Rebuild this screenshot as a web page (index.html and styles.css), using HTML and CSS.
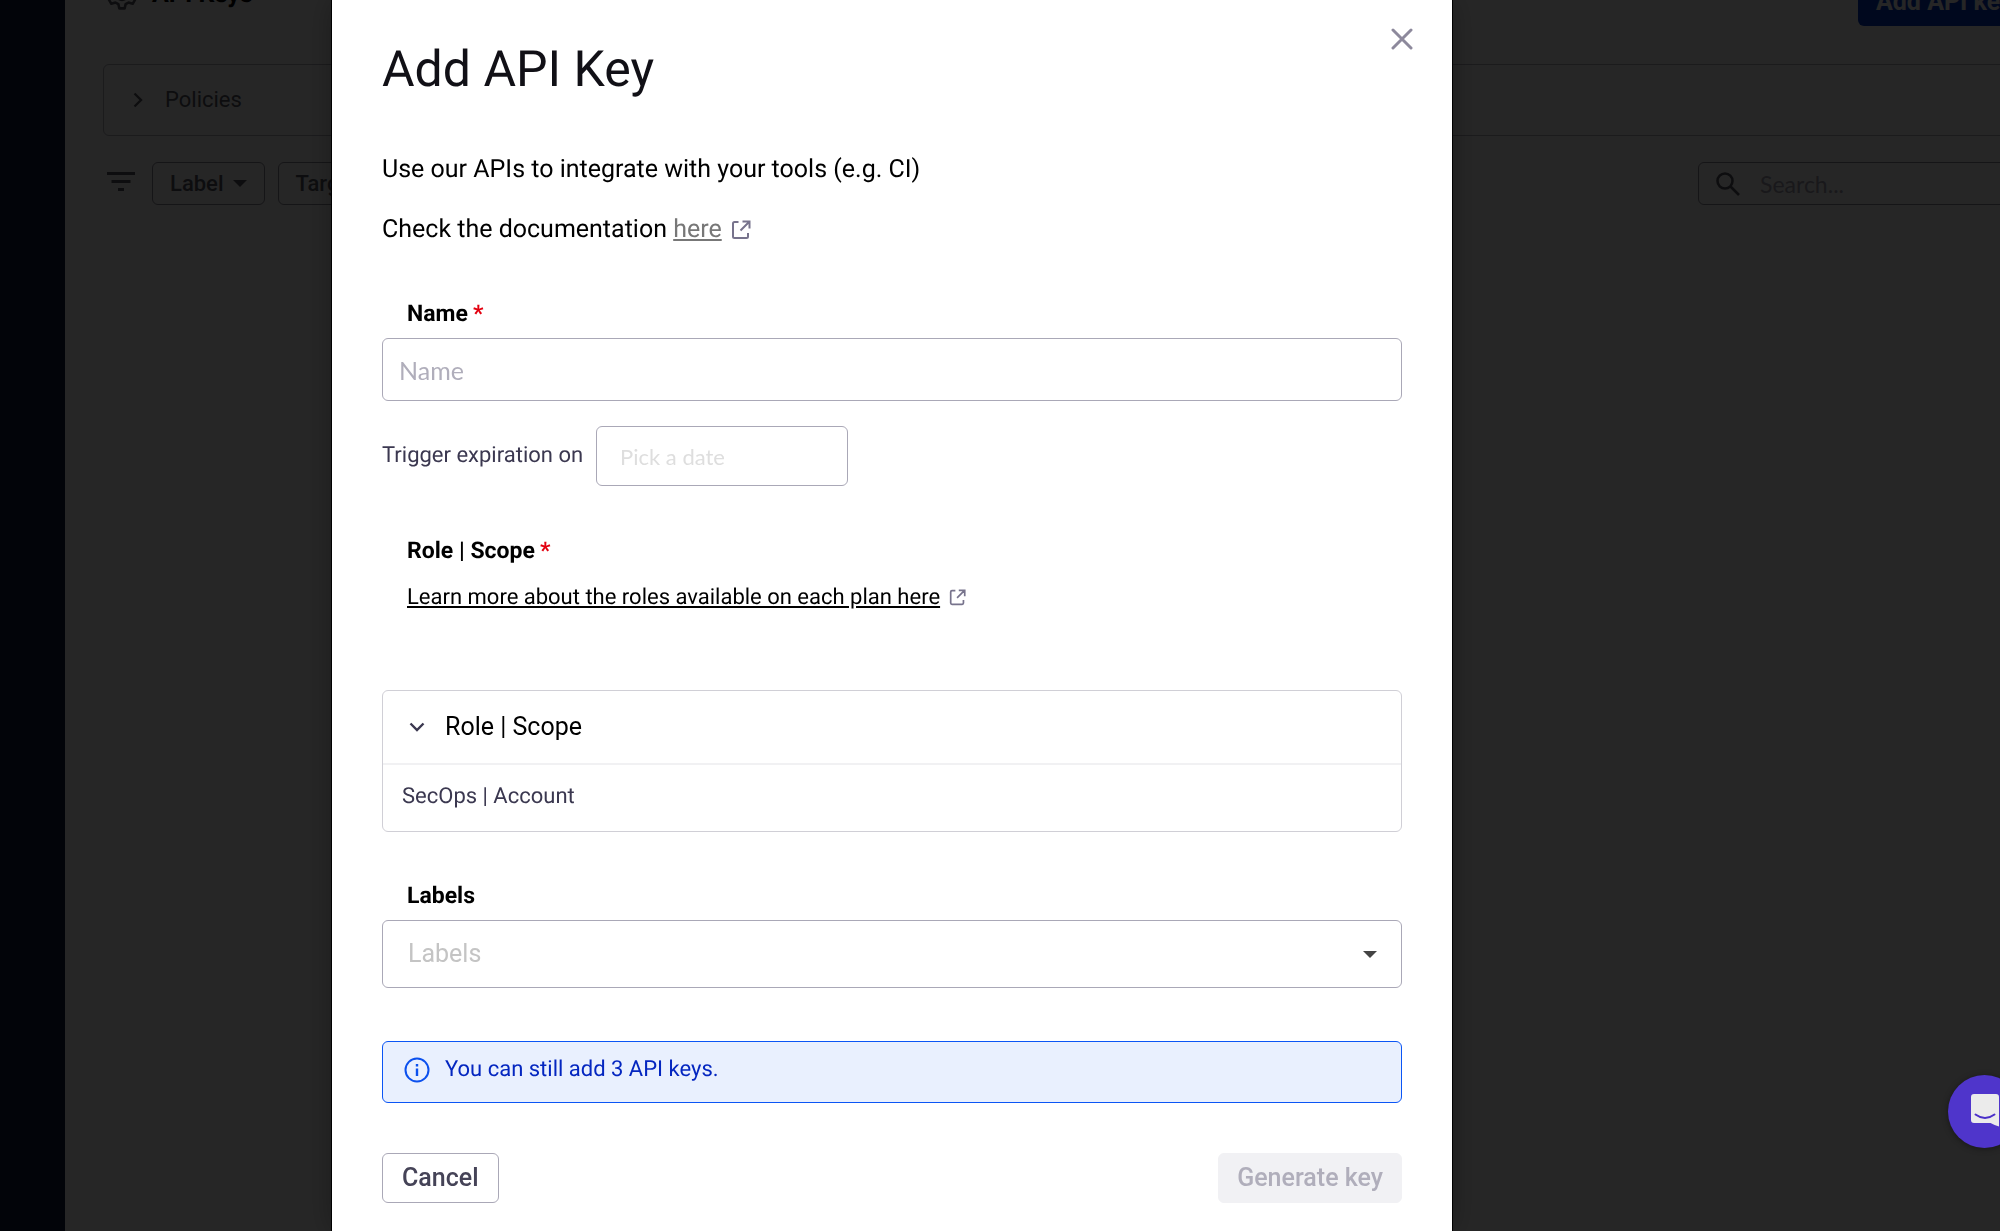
FILE: index.html
```html
<!DOCTYPE html>
<html lang="en">
<head>
  <meta charset="UTF-8" />
  <meta name="viewport" content="width=device-width, initial-scale=1.0"/>
  <title>API Keys</title>
  <link rel="stylesheet" href="styles.css">
</head>
<body>
  <div class="app">
    <nav class="sidebar"></nav>

    <main class="content">
      <header class="page-header">
        <svg class="gear" viewBox="0 0 30 30" fill="none" stroke="currentColor" stroke-width="2.4" stroke-linejoin="round">
          <path d="M12.500 1.500h5l.9 4 2.700 1.500 3.900-1.200 2.500 4.300-3 2.800v4.200l3 2.800-2.500 4.300-3.900-1.200-2.700 1.500-.9 4h-5l-.9-4-2.700-1.500-3.900 1.200-2.500-4.300 3-2.800v-4.200l-3-2.800 2.500-4.300 3.900 1.200 2.700-1.500z"/>
          <circle cx="15" cy="15" r="5.500"/>
        </svg>
        <h2>API Keys</h2>
        <button class="add-btn">Add API key</button>
      </header>

      <button class="policies">
        <svg width="10" height="16" viewBox="0 0 10 16" fill="none" stroke="currentColor" stroke-width="2.400"><path d="M1.500 1.500l6.500 6.500-6.500 6.500"/></svg>
        Policies
      </button>

      <div class="filters">
        <svg class="filter-icon" width="28" height="20" viewBox="0 0 28 20" fill="currentColor">
          <path d="M0 0h28v3H0zM4.500 8h19v3h-19zM11 16h6v3h-6z"/>
        </svg>
        <button class="filter-btn">Label <span class="caret"></span></button>
        <button class="filter-btn">Target <span class="caret"></span></button>
        <div class="search">
          <svg width="24" height="24" viewBox="0 0 24 24" fill="none" stroke="currentColor" stroke-width="2.600">
            <circle cx="9" cy="9" r="7.500"/>
            <path d="M14.500 14.500l8.500 8.500"/>
          </svg>
          <input type="text" placeholder="Search..." aria-label="Search" />
        </div>
      </div>
    </main>
  </div>

  <div class="overlay">
    <div class="modal" role="dialog" aria-labelledby="modalTitle">
      <button class="close" aria-label="Close">
        <svg width="22" height="22" viewBox="0 0 22 22" stroke="currentColor" stroke-width="3" stroke-linecap="round"><path d="M2 2l18 18M20 2L2 20"/></svg>
      </button>

      <h1 id="modalTitle">Add API Key</h1>

      <p>Use our APIs to integrate with your tools (e.g. CI)</p>
      <p>Check the documentation <a class="doc-link" href="#">here</a>
        <svg class="external" viewBox="0 0 20 20" fill="none" stroke="currentColor" stroke-width="2"><path d="M7.500 2H3.500Q2 2 2 3.500v13Q2 18 3.500 18h12q1.500 0 1.500-1.500V13M11.500 1.500h7v7M18 2l-8.500 8.500"/></svg>
      </p>

      <form>
        <label class="field-label" for="name">Name<span class="required">*</span></label>
        <input class="text-input" type="text" id="name" placeholder="Name" />

        <div class="expiration">
          <label for="expiration">Trigger expiration on</label>
          <input type="text" id="expiration" placeholder="Pick a date" />
        </div>

        <div class="field-label">Role | Scope<span class="required">*</span></div>
        <div class="roles-info">
          <a href="#">Learn more about the roles available on each plan here</a>
          <svg class="external small" viewBox="0 0 20 20" fill="none" stroke="currentColor" stroke-width="2"><path d="M7.500 2H3.500Q2 2 2 3.500v13Q2 18 3.500 18h12q1.500 0 1.500-1.500V13M11.500 1.500h7v7M18 2l-8.500 8.500"/></svg>
        </div>

        <div class="accordion">
          <button type="button" class="accordion-header">
            <svg width="16" height="10" viewBox="0 0 16 10" fill="none" stroke="currentColor" stroke-width="2.400"><path d="M1.500 1.500L8 8l6.500-6.500"/></svg>
            Role | Scope
          </button>
          <div class="accordion-row">SecOps | Account</div>
        </div>

        <label class="field-label" for="labels">Labels</label>
        <div class="select-wrap">
          <select id="labels">
            <option>Labels</option>
          </select>
          <span class="caret"></span>
        </div>

        <div class="notice">
          <svg width="26" height="26" viewBox="0 0 26 26" fill="none" stroke="currentColor" stroke-width="2">
            <circle cx="13" cy="13" r="11.500"/>
            <path d="M13 11.500v7.500M13 7v2.500" stroke-width="2.400"/>
          </svg>
          You can still add 3 API keys.
        </div>

        <div class="actions">
          <button type="button" class="cancel">Cancel</button>
          <button type="submit" class="generate" disabled>Generate key</button>
        </div>
      </form>
    </div>
  </div>

  <button class="chat" aria-label="Open chat">
    <svg width="30" height="34" viewBox="0 0 30 34">
      <path d="M4 1h22q3 0 3 3v29.500q-4-1-8.500-3.500H4q-3 0-3-3V4q0-3 3-3z" fill="#ebebeb"/>
      <path d="M5.500 21.500q9.500 7 19 0" fill="none" stroke="#4a2fc9" stroke-width="2" stroke-linecap="round"/>
    </svg>
  </button>
</body>
</html>
```
FILE: styles.css
```css
* {
  box-sizing: border-box;
}

body {
  margin: 0;
  font-family: Roboto, sans-serif;
  font-size: 22px;
  line-height: 28px;
  color: #000;
  background-color: #fff;
  height: 100vh;
  overflow: hidden;
  text-rendering: geometricPrecision;
}

button,
input,
select {
  font-family: inherit;
  font-size: inherit;
  line-height: inherit;
  color: inherit;
  margin: 0;
}

svg {
  flex-shrink: 0;
}

/* Page behind the dialog */
.app {
  display: flex;
  height: 100vh;
}

.sidebar {
  width: 65px;
  background-color: #0f1e3c;
}

.content {
  flex: 1;
  padding-left: 38px;
  margin-right: -60px;
  color: #5a5a64;
}

.page-header {
  display: flex;
  align-items: center;
  height: 48px;
  margin-top: -22px;
  padding-left: 3px;
}

.gear {
  width: 32px;
  height: 32px;
  margin-top: -16px;
}

.page-header h2 {
  margin: -14px 0 0 14px;
  font-size: 25px;
  font-weight: 700;
  color: #000;
}

.add-btn {
  margin-left: auto;
  width: 202px;
  height: 48px;
  padding: 0 18px;
  border: none;
  border-radius: 6px;
  background-color: #0439c8;
  color: #fff;
  font-size: 25px;
  font-weight: 700;
  text-align: left;
  white-space: nowrap;
}

.policies {
  display: flex;
  align-items: center;
  gap: 22px;
  width: 100%;
  height: 72px;
  margin-top: 38px;
  padding: 0 29px;
  border: 1px solid #b4b2be;
  border-radius: 6px;
  background-color: transparent;
}

.filters {
  display: flex;
  align-items: center;
  gap: 13px;
  margin-top: 26px;
  padding-left: 4px;
}

.filter-icon {
  margin: 0 4px 4px 0;
}

.filter-btn {
  display: flex;
  align-items: center;
  gap: 9px;
  height: 43px;
  padding: 0 17px;
  border: 1px solid #8d8b99;
  border-radius: 6px;
  background-color: transparent;
  font-weight: 500;
}

.caret {
  border: 7px solid transparent;
  border-top-color: currentColor;
  border-bottom: none;
}

.search {
  display: flex;
  align-items: center;
  gap: 18px;
  width: 362px;
  height: 43px;
  margin-left: auto;
  padding: 0 17px;
  border: 1px solid #8d8b99;
  border-radius: 6px;
}

.search input {
  width: 200px;
  border: none;
  background-color: transparent;
  font-family: Lato, sans-serif;
  font-size: 23px;
}

.search input::placeholder {
  color: #a5a3b2;
}

/* Dialog */
.overlay {
  position: fixed;
  inset: 0;
  padding-left: 332px;
  background-color: rgba(0, 0, 0, 0.85);
}

.modal {
  position: relative;
  width: 1120px;
  max-width: 100%;
  min-height: 100vh;
  padding: 40px 50px 28px;
  background-color: #fff;
  box-shadow: 0 0 0 1px #000, 0 0 28px rgba(0, 0, 0, 0.3);
}

.close {
  position: absolute;
  top: 28px;
  right: 39px;
  display: flex;
  padding: 0;
  border: none;
  background-color: transparent;
  color: #8d899c;
}

.modal h1 {
  margin: 0 0 55px;
  font-size: 50px;
  line-height: 60px;
  font-weight: 400;
  color: #111016;
}

.modal p {
  margin: 0 0 30px;
  font-size: 25px;
  line-height: 30px;
}

.doc-link {
  color: #777;
}

.external {
  width: 20px;
  height: 20px;
  margin-left: 3px;
  vertical-align: -3px;
  color: #77738c;
}

.external.small {
  width: 17px;
  height: 17px;
  vertical-align: -2px;
}

form {
  padding-top: 25px;
}

.field-label {
  display: block;
  margin-bottom: 10px;
  padding-left: 25px;
  font-size: 23px;
  font-weight: 700;
}

.required {
  margin-left: 5px;
  color: #e3000f;
}

.text-input {
  display: block;
  width: 100%;
  height: 63px;
  padding: 0 16px;
  border: 1px solid #aaa8b7;
  border-radius: 6px;
  font-family: Lato, sans-serif;
  font-size: 25px;
}

.text-input::placeholder {
  color: #b0aebb;
}

.expiration {
  display: flex;
  align-items: center;
  gap: 13px;
  margin: 25px 0 51px;
  color: #3b3850;
}

.expiration input {
  width: 252px;
  height: 60px;
  padding: 0 23px;
  border: 1px solid #aaa8b7;
  border-radius: 6px;
  font-family: Lato, sans-serif;
}

.expiration input::placeholder {
  color: #dedede;
}

.roles-info {
  margin: 19px 0 78px;
  padding-left: 25px;
}

.roles-info a {
  color: #000;
}

.accordion {
  margin-bottom: 50px;
  border: 1px solid #d0cfd6;
  border-radius: 6px;
}

.accordion-header {
  display: flex;
  align-items: center;
  gap: 20px;
  width: 100%;
  height: 74px;
  padding: 0 26px;
  border: none;
  border-bottom: 2px solid #f1f1f3;
  background-color: transparent;
  font-size: 25px;
}

.accordion-header svg {
  color: #3b3850;
}

.accordion-row {
  padding: 18px 19px 20px;
  color: #3b3850;
}

.select-wrap {
  display: flex;
  align-items: center;
}

.select-wrap select {
  appearance: none;
  width: 100%;
  height: 68px;
  padding: 0 25px;
  border: 1px solid #aaa8b7;
  border-radius: 6px;
  background-color: #fff;
  color: #c4c4c4;
  font-size: 25px;
}

.select-wrap .caret {
  margin-left: -39px;
  color: #444;
  pointer-events: none;
}

.notice {
  display: flex;
  align-items: center;
  gap: 15px;
  height: 62px;
  margin: 53px 0 50px;
  padding: 0 21px 4px;
  border: 1px solid #0b55f5;
  border-radius: 6px;
  background-color: #e9f0fe;
  color: #0426c0;
}

.notice svg {
  color: #0b50ee;
}

.actions {
  display: flex;
  justify-content: space-between;
}

.actions button {
  height: 50px;
  padding: 0 19px;
  border: 1px solid #aaa8b7;
  border-radius: 6px;
  background-color: #fff;
  color: #454357;
  font-size: 25px;
  font-weight: 500;
}

.actions .generate {
  padding: 0 18px;
  border-color: #f1f1f4;
  background-color: #f1f1f4;
  color: #b0aebb;
}

.chat {
  position: fixed;
  right: -21px;
  bottom: 83px;
  width: 73px;
  height: 73px;
  padding: 3px 0 0;
  border: none;
  border-radius: 50%;
  background-color: #4f35cb;
  box-shadow: 0 1px 6px rgba(0, 0, 0, 0.4);
}
```
